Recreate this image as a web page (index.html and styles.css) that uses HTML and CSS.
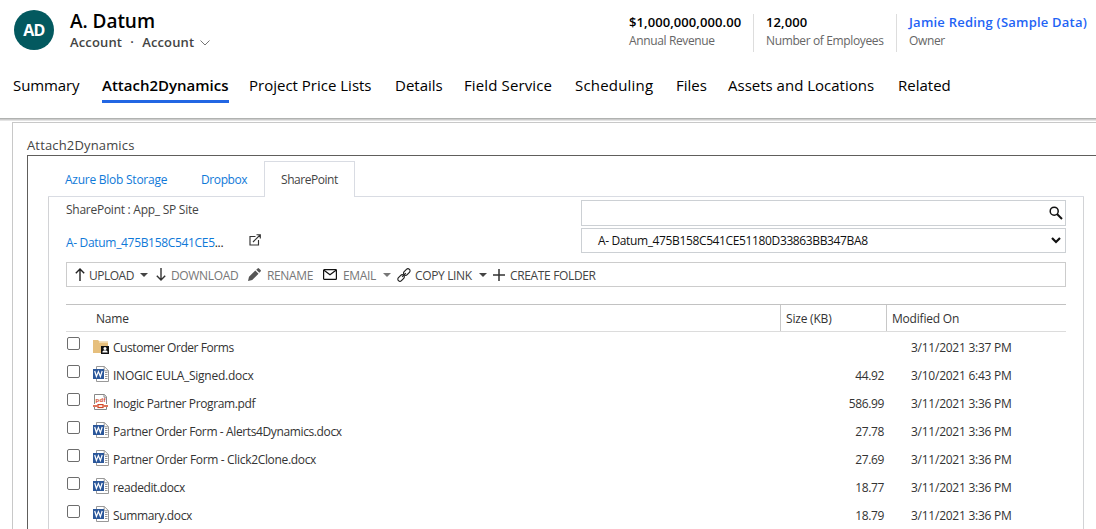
FILE: index.html
```html
<!DOCTYPE html>
<html lang="en">
<head>
<meta charset="utf-8">
<title>A. Datum</title>
<link rel="stylesheet" href="styles.css">
</head>
<body>
<svg class="defs" aria-hidden="true">
  <symbol id="word" viewBox="0 0 16 16">
    <path d="M3.500 3V.5h7.800L15.500 4.700v10.800h-12V13" fill="#fff" stroke="#999"/>
    <path d="M11.200.5v4.300h4.300" fill="none" stroke="#999"/>
    <path d="M12 6.500h2.500M12 8.500h2.500M12 10.500h2.500M12 12.500h2.500" stroke="#999"/>
    <path d="M0 3h11v10H0z" fill="#2b579a"/>
    <path d="M1.700 5 3.400 10.500 5.400 5.600l2 4.900L9.200 5" fill="none" stroke="#fff" stroke-width="1.200"/>
  </symbol>
  <symbol id="caret" viewBox="0 0 8 4"><path d="M0 0h8L4 4z" fill="currentColor"/></symbol>
</svg>
<header class="header">
  <div class="record">
    <div class="avatar">AD</div>
    <div class="identity">
      <h1 class="name">A. Datum</h1>
      <div class="kind"><span>Account</span><span class="dot">·</span><span>Account</span>
        <svg class="chev" viewBox="0 0 10 6"><path d="M.5.5 5 5 9.500.5" fill="none" stroke="#666" stroke-width=".9"/></svg></div>
    </div>
    <div class="facts">
      <div class="fact revenue"><b>$1,000,000,000.00</b><span>Annual Revenue</span></div>
      <div class="fact employees"><b>12,000</b><span>Number of Employees</span></div>
      <div class="fact owner"><b>Jamie Reding (Sample Data)</b><span>Owner</span></div>
    </div>
  </div>
  <nav class="tabs">
    <a class="t1">Summary</a><a class="t2 active">Attach2Dynamics</a><a class="t3">Project Price Lists</a><a class="t4">Details</a><a class="t5">Field Service</a><a class="t6">Scheduling</a><a class="t7">Files</a><a class="t8">Assets and Locations</a><a class="t9">Related</a>
  </nav>
</header>
<main class="panel">
  <h2 class="title">Attach2Dynamics</h2>
  <section class="frame">
    <nav class="stores"><a class="azure">Azure Blob Storage</a><a class="dropbox">Dropbox</a><a class="current">SharePoint</a><i class="rest"></i></nav>
    <div class="content">
      <div class="top">
        <div class="site">
          <div class="sitename">SharePoint : App_ SP Site</div>
          <div class="path"><a>A- Datum_475B158C541CE5<span>...</span></a>
            <svg class="open" viewBox="0 0 12 12" fill="none" stroke="#333" stroke-width="1.150"><path d="M6.500 2.500H1v8.500h8.500V6M4 8l7-7M7.500.7h3.800v3.800"/></svg></div>
        </div>
        <div class="pickers">
          <div class="field"><svg class="search" viewBox="0 0 14 14" fill="none" stroke="#111"><circle cx="5.200" cy="5.200" r="4" stroke-width="1.500"/><path d="m8 8 5 5" stroke-width="2"/></svg></div>
          <div class="field select"><span>A- Datum_475B158C541CE51180D33863BB347BA8</span><svg class="down" viewBox="0 0 10 7"><path d="m1 1 4 4 4-4" fill="none" stroke="#111" stroke-width="2.200"/></svg></div>
        </div>
      </div>
      <div class="toolbar">
        <div class="tool upload"><svg viewBox="0 0 10 13" fill="none" stroke="#222" stroke-width="1.400"><path d="M5 13V1M.8 5.200 5 1l4.200 4.200"/></svg><span>UPLOAD</span><svg class="caret"><use href="#caret"/></svg></div>
        <div class="tool download dim"><svg viewBox="0 0 10 13" fill="none" stroke="#333" stroke-width="1.400"><path d="M5 0v12M.8 7.800 5 12l4.200-4.200"/></svg><span>DOWNLOAD</span></div>
        <div class="tool rename dim"><svg viewBox="0 0 13 13" fill="#555"><path d="M0 13l1-4.200L7.300 2.500l3.200 3.200L4.200 12zM8.200 1.700 9.600.4q.7-.7 1.400 0l1.600 1.600q.7.700 0 1.400l-1.300 1.400z"/></svg><span>RENAME</span></div>
        <div class="tool email dim"><svg viewBox="0 0 14 11" fill="none" stroke="#111" stroke-width="1.200"><rect x=".6" y=".6" width="12.800" height="9.800" rx=".7"/><path d="m1 1.200 6 4.600 6-4.600"/></svg><span>EMAIL</span><svg class="caret"><use href="#caret"/></svg></div>
        <div class="tool copy"><svg viewBox="0 0 14 14" fill="none" stroke="#222" stroke-width="1.200"><rect x="-3.700" y="-2.100" width="7.400" height="4.200" rx="2.100" transform="translate(9.800 4) rotate(-45)"/><rect x="-3.700" y="-2.100" width="7.400" height="4.200" rx="2.100" transform="translate(4.100 10) rotate(-45)"/><path d="m5.200 8.800 3.600-3.600"/></svg><span>COPY LINK</span><svg class="caret"><use href="#caret"/></svg></div>
        <div class="tool create"><svg viewBox="0 0 12 12"><path d="M6 0v12M0 6h12" stroke="#333" stroke-width="1.500"/></svg><span>CREATE FOLDER</span></div>
      </div>
      <div class="table">
        <div class="row head"><div class="cname">Name</div><div class="csize">Size (KB)</div><div class="cdate">Modified On</div></div>
        <div class="row"><i class="box"></i><svg class="icon" viewBox="0 0 16 16"><path d="M0 2h5l1.500 1.500H15V15H0z" fill="#e6bf7d"/><path d="M6 4.500h9" stroke="#f2d8a8"/><path d="M8 8h8v8H8z" fill="#111"/><circle cx="12" cy="10.600" r="1.500" fill="#fff"/><path d="M9.300 14.500c0-3 5.400-3 5.400 0z" fill="#fff"/></svg><span class="file f1">Customer Order Forms</span><span class="size"></span><span class="date">3/11/2021 3:37 PM</span></div>
        <div class="row"><i class="box"></i><svg class="icon"><use href="#word"/></svg><span class="file f2">INOGIC EULA_Signed.docx</span><span class="size">44.92</span><span class="date">3/10/2021 6:43 PM</span></div>
        <div class="row"><i class="box"></i><svg class="icon" viewBox="0 0 16 16"><path d="M1.500 10V.5h9.800l2.200 2.200V10M1.500 13v2.500h12V13" fill="#fff" stroke="#888"/><path d="M11 .5v2.700h2.500" fill="none" stroke="#888"/><text class="pdf" x="2.500" y="8" textLength="10">pdf</text><path d="M0 12h4.500M10.500 12H15" stroke="#d24726" stroke-width="1.300"/><rect x="5" y="10.600" width="5" height="2.900" fill="#fff" stroke="#d24726" stroke-width="1.200"/></svg><span class="file f3">Inogic Partner Program.pdf</span><span class="size">586.99</span><span class="date">3/11/2021 3:36 PM</span></div>
        <div class="row"><i class="box"></i><svg class="icon"><use href="#word"/></svg><span class="file f4">Partner Order Form - Alerts4Dynamics.docx</span><span class="size">27.78</span><span class="date">3/11/2021 3:36 PM</span></div>
        <div class="row"><i class="box"></i><svg class="icon"><use href="#word"/></svg><span class="file f5">Partner Order Form - Click2Clone.docx</span><span class="size">27.69</span><span class="date">3/11/2021 3:36 PM</span></div>
        <div class="row"><i class="box"></i><svg class="icon"><use href="#word"/></svg><span class="file f6">readedit.docx</span><span class="size">18.77</span><span class="date">3/11/2021 3:36 PM</span></div>
        <div class="row"><i class="box"></i><svg class="icon"><use href="#word"/></svg><span class="file f7">Summary.docx</span><span class="size">18.79</span><span class="date">3/11/2021 3:36 PM</span></div>
      </div>
    </div>
  </section>
</main>
</body>
</html>
```
FILE: styles.css
```css
* { box-sizing: border-box; }
body { margin: 0; width: 1096px; height: 529px; overflow: hidden; background: #fff; color: #333; font: 12px/16px "Open Sans", "Noto Sans", sans-serif; letter-spacing: -0.25px; white-space: nowrap; }
.defs { display: none; }
svg { display: block; flex: none; }
h1, h2 { margin: 0; }

.header { height: 118px; box-shadow: 0 1px 0 #b0b2b0, 0 2px 0 #ccc, 0 3px 0 #e4e4e4; }
.record { display: flex; height: 70px; padding-left: 14px; }
.avatar { width: 40px; height: 40px; margin-top: 10px; border-radius: 50%; background: #03595f; color: #fff; font-size: 16px; font-weight: 700; line-height: 41px; text-align: center; letter-spacing: -0.7px; }
.identity { width: 575px; padding: 8px 0 0 16px; }
.name { color: #000; font-size: 19px; font-weight: 600; line-height: 26px; letter-spacing: -0.05px; }
.kind { display: flex; align-items: center; color: #444; font-size: 13px; font-weight: 600; line-height: 17px; letter-spacing: 0.15px; }
.dot { width: 20px; text-align: center; }
.chev { width: 10px; height: 6px; margin-left: 6px; }
.facts { display: flex; padding-top: 14px; }
.fact { display: flex; flex-direction: column; height: 38px; font-size: 12px; }
.fact b { color: #000; font-size: 13px; font-weight: 600; line-height: 16px; letter-spacing: 0.08px; }
.fact span { color: #666; line-height: 22px; letter-spacing: -0.37px; }
.revenue { width: 124px; }
.employees { width: 143px; padding-left: 12px; border-left: 1px solid #ddd; }
.owner { padding-left: 12px; border-left: 1px solid #ddd; }
.fact.owner b { color: #1f64f5; letter-spacing: 0.22px; }
.tabs { display: flex; padding: 4px 0 0 13px; color: #000; font-size: 15px; line-height: 22px; letter-spacing: 0; }
.tabs a { height: 29px; }
.t1 { width: 89px; letter-spacing: -0.1px; }
.t2 { width: 127px; margin-right: 20px; }
.active { border-bottom: 3px solid #2266e3; font-weight: 600; }
.t3 { width: 146px; }
.t4 { width: 69px; }
.t5 { width: 111px; letter-spacing: 0.12px; }
.t6 { width: 101px; letter-spacing: 0.2px; }
.t7 { width: 52px; }
.t8 { width: 170px; }

.panel { height: 407px; margin-left: 12px; border-top: 1px solid #c8c8c8; border-left: 1px solid #c8c8c8; margin-top: 4px; padding-left: 14px; }
.title { padding-top: 13px; height: 32px; color: #444; font-size: 13px; font-weight: 400; line-height: 18px; letter-spacing: 0.15px; }
.frame { height: 374px; padding: 5px 12px 0 20px; border: solid #605e5c; border-width: 1px 0 0 1px; }
.stores { display: flex; height: 36px; color: #0f79d8; }
.stores a { border-bottom: 1px solid #d9dce3; line-height: 37px; }
.azure { width: 153px; padding-left: 17px; }
.dropbox { width: 63px; letter-spacing: -0.4px; }
.stores .current { width: 91px; padding-left: 16px; border: 1px solid #d9dce3; border-bottom: 0; color: #444; line-height: 35px; letter-spacing: -0.45px; }
.rest { flex: 1; border-bottom: 1px solid #d9dce3; }
.content { height: 332px; padding: 3px 17px 0; border: solid #d2d3d6; border-width: 0 1px; }
.top { display: flex; height: 62px; }
.site { width: 515px; color: #444; }
.sitename { line-height: 20px; letter-spacing: -0.26px; }
.path { display: flex; padding-top: 11px; line-height: 24px; color: #0f79d8; letter-spacing: -0.32px; }
.path a { width: 183px; }
.path span { color: #222; }
.open { width: 12px; height: 12px; margin-top: 3px; }
.pickers { width: 485px; }
.field { display: flex; align-items: center; height: 26px; margin-bottom: 2px; border: 1px solid #ccd0d4; color: #111; }
.search { width: 14px; height: 14px; margin-left: 467px; }
.select { height: 25px; padding-left: 16px; letter-spacing: -0.37px; }
.select span { width: 452px; padding-top: 1px; }
.down { width: 10px; height: 7px; margin-left: 1px; }
.toolbar { display: flex; align-items: center; height: 25px; padding: 2px 0 0 8px; border: 1px solid #ccc; color: #444; }
.tool { display: flex; align-items: center; letter-spacing: -0.35px; }
.tool svg { margin-top: -2px; }
.dim { color: #777; }
.tool .caret { width: 8px; height: 4px; }
.upload { width: 81px; }
.upload > svg:first-child, .download > svg { width: 10px; height: 13px; margin-right: 4px; }
.upload span { width: 51px; letter-spacing: -0.5px; }
.download { width: 92px; }
.download span { margin-left: 1px; }
.rename { width: 75px; }
.rename svg { width: 13px; height: 13px; margin-right: 6px; }
.email { width: 74px; }
.email > svg:first-child { width: 14px; height: 11px; margin-right: 6px; }
.email span { width: 40px; }
.copy { width: 96px; }
.copy > svg:first-child { width: 14px; height: 14px; margin-right: 4px; }
.copy span { width: 64px; }
.create svg { width: 12px; height: 12px; margin-right: 5px; }

.table { margin-top: 17px; border-top: 1px solid #c2c2c2; }
.row { display: flex; height: 28px; }
.head { height: 27px; border-bottom: 1px solid #dcdcdc; line-height: 27px; letter-spacing: -0.2px; }
.cname { width: 714px; padding-left: 30px; }
.csize { width: 106px; padding-left: 5px; border-left: 1px solid #c8c8c8; }
.cdate { padding-left: 5px; border-left: 1px solid #c8c8c8; }
.box { width: 13px; height: 13px; margin: 5px 14px 0 1px; border: 1px solid #6d6d6d; border-radius: 2px; }
.icon { width: 16px; height: 16px; margin: 6px 4px 0 -1px; }
.pdf { font: 700 6px "Liberation Sans", sans-serif; fill: #d24726; letter-spacing: 0; }
.file, .size, .date { line-height: 32px; }
.file { width: 637px; letter-spacing: -0.38px; }
.f1 { letter-spacing: -0.44px; }
.f2 { letter-spacing: -0.25px; }
.f5 { letter-spacing: -0.33px; }
.size { width: 134px; text-align: right; line-height: 31px; letter-spacing: -0.35px; }
.date { margin-left: 27px; line-height: 31px; }
```
